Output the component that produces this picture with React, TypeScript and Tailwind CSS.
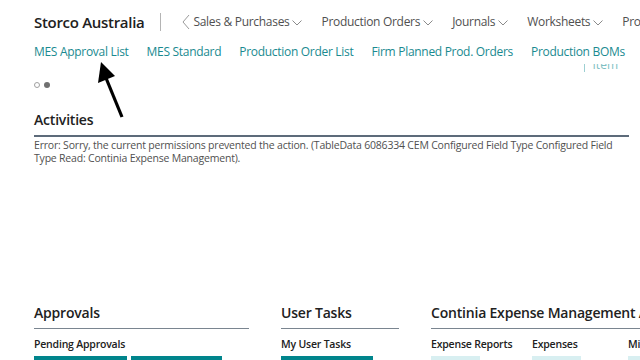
import React from 'react';

const navItems = ['Sales & Purchases', 'Production Orders', 'Journals', 'Worksheets', 'Prod'];
const links = ['MES Approval List', 'MES Standard', 'Production Order List', 'Firm Planned Prod. Orders', 'Production BOMs'];

const ChevronDown = () => (
  <svg width="10" height="6" viewBox="0 0 10 6" className="ml-[3px] mt-[2px] shrink-0">
    <path d="M0.5 0.5 L5 5 L9.5 0.5" fill="none" stroke="#8a8a8a" strokeWidth="1" />
  </svg>
);

const App: React.FC = () => {
  return (
    <div
      className="relative w-[640px] h-[360px] overflow-hidden bg-white text-[#212121]"
      style={{ fontFamily: '"Open Sans", "Noto Sans", sans-serif' }}
    >
      {/* top bar */}
      <div className="flex items-center h-[44px] pl-[34px] whitespace-nowrap">
        <span className="shrink-0 text-[15px] font-semibold tracking-[-0.3px] text-[#212121]">Storco Australia</span>
        <div className="shrink-0 ml-[16px] w-px h-[18px] bg-[#b4b4b4]" />
        <svg width="8" height="16" viewBox="0 0 8 16" className="shrink-0 ml-[21px]">
          <path d="M7 1 L1 8 L7 15" fill="none" stroke="#9a9a9a" strokeWidth="1" />
        </svg>
        <div className="flex items-center ml-[3px] gap-[19px]">
          {navItems.map((n, i) => (
            <div key={n} className="flex shrink-0 items-center text-[12px] tracking-[-0.3px] text-[#505050]">
              <span>{n}</span>
              {i < navItems.length - 1 && <ChevronDown />}
            </div>
          ))}
        </div>
      </div>

      {/* action links */}
      <div className="flex items-center h-[16px] pl-[34px] gap-[18px] whitespace-nowrap text-[12px] tracking-[-0.3px] text-[#1a8a90]">
        {links.map((l) => (
          <span key={l} className="shrink-0">{l}</span>
        ))}
      </div>

      {/* partly hidden action row */}
      <div className="flex justify-end h-[14px] mt-[4px] pr-[22px] overflow-hidden">
        <div className="flex items-start gap-[8px] -mt-[7px] text-[12px] leading-[16px] text-[#7fbfc3]">
          <span className="mt-[6px] w-px h-[9px] bg-[#9ccfd2]" />
          <span>Item</span>
        </div>
      </div>

      {/* carousel dots */}
      <div className="flex items-center gap-[4px] pl-[34px] mt-[3px] h-[8px]">
        <span className="w-[6px] h-[6px] rounded-full border border-[#a0a0a0]" />
        <span className="w-[6px] h-[6px] rounded-full bg-[#707070]" />
      </div>

      {/* activities */}
      <div className="pl-[34px] pr-[11px] mt-[22px]">
        <div className="text-[14px] font-semibold tracking-[-0.2px] leading-[18px] text-[#212121]">Activities</div>
        <div className="mt-[6px] h-[2px] bg-[#5d6b7a]" />
        <p className="mt-[2px] text-[10.5px] leading-[13px] tracking-[-0.2px] text-[#505050] w-[590px]">
          Error: Sorry, the current permissions prevented the action. (TableData 6086334 CEM Configured Field Type Configured Field Type Read: Continia Expense Management).
        </p>
      </div>

      {/* bottom parts */}
      <div className="flex pl-[34px] mt-[139px] whitespace-nowrap">
        <div className="w-[215px] shrink-0">
          <div className="text-[14px] font-semibold tracking-[-0.2px] leading-[18px]">Approvals</div>
          <div className="mt-[6px] h-px bg-[#7a8590]" />
          <div className="mt-[8px] text-[10.5px] font-semibold tracking-[-0.2px] leading-[14px]">Pending Approvals</div>
          <div className="flex gap-[4px] mt-[5px]">
            <div className="w-[93px] h-[20px] bg-[#00858c]" />
            <div className="w-[91px] h-[20px] bg-[#00858c]" />
          </div>
        </div>
        <div className="w-[118px] shrink-0 ml-[32px]">
          <div className="text-[14px] font-semibold tracking-[-0.2px] leading-[18px]">User Tasks</div>
          <div className="mt-[6px] h-px bg-[#7a8590]" />
          <div className="mt-[8px] text-[10.5px] font-semibold tracking-[-0.2px] leading-[14px]">My User Tasks</div>
          <div className="flex mt-[5px]">
            <div className="w-[92px] h-[20px] bg-[#00858c]" />
          </div>
        </div>
        <div className="w-[300px] shrink-0 ml-[32px]">
          <div className="text-[14px] font-semibold tracking-[-0.2px] leading-[18px]">Continia Expense Management Activities</div>
          <div className="mt-[6px] h-px bg-[#7a8590]" />
          <div className="flex mt-[8px] text-[10.5px] font-semibold tracking-[-0.2px] leading-[14px]">
            <div className="w-[101px]">
              <div>Expense Reports</div>
              <div className="mt-[5px] w-[49px] h-[20px] bg-[#d8eff1]" />
            </div>
            <div className="w-[96px]">
              <div>Expenses</div>
              <div className="mt-[5px] w-[49px] h-[20px] bg-[#d8eff1]" />
            </div>
            <div>
              <div>Mileage</div>
              <div className="mt-[5px] w-[49px] h-[20px] bg-[#d8eff1]" />
            </div>
          </div>
        </div>
      </div>

      {/* annotation arrow */}
      <svg className="absolute left-[93px] top-[58px]" width="40" height="64" viewBox="0 0 40 64">
        <path d="M29 59 L13 20" stroke="#000" strokeWidth="3.2" strokeLinecap="butt" fill="none" />
        <polygon points="8,4 5,25 22,18" fill="#000" />
      </svg>
    </div>
  );
};

export default App;
